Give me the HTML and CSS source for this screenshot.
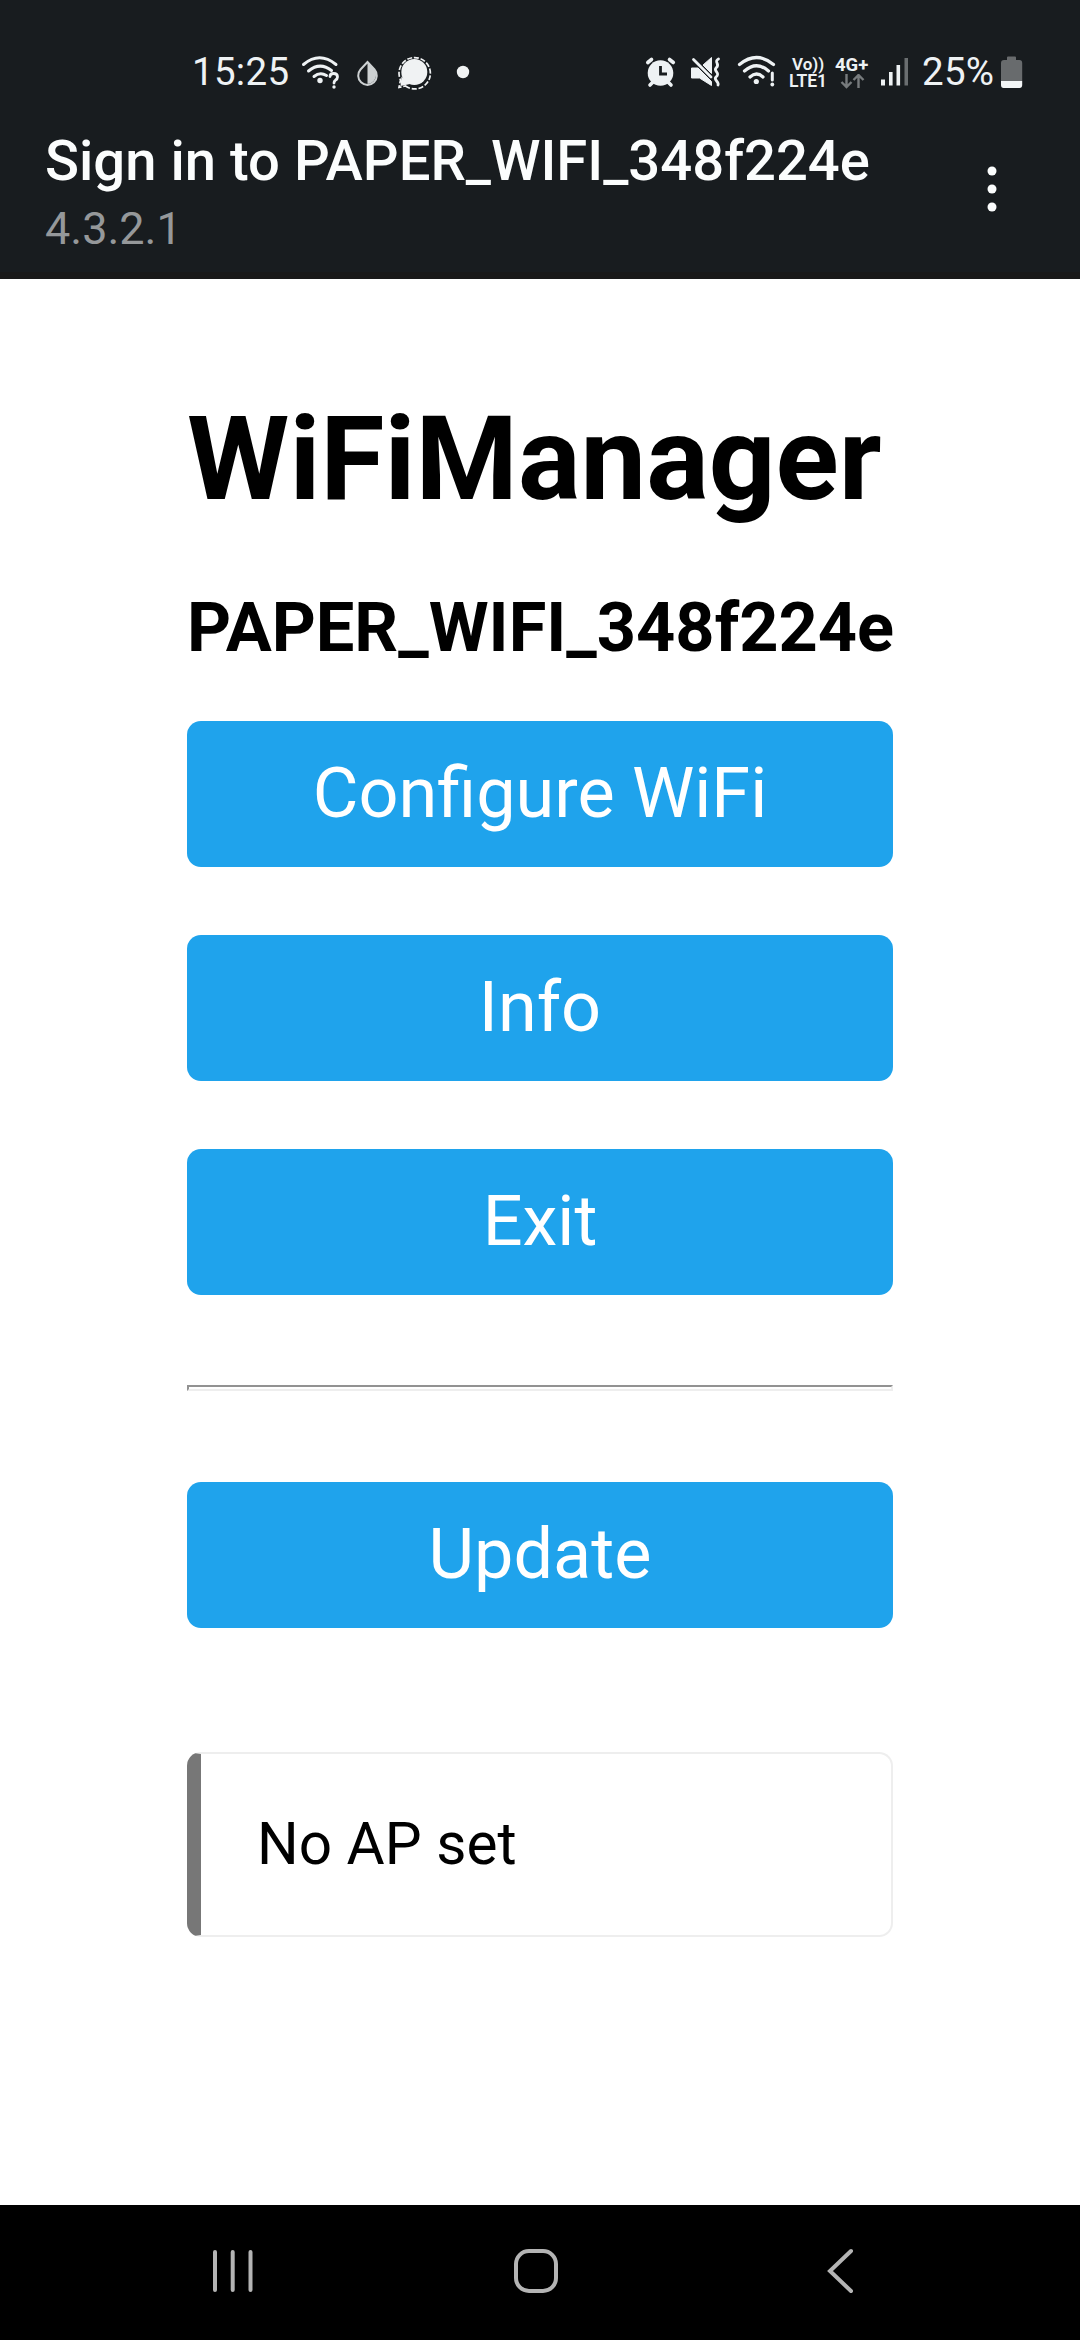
FILE: index.html
```html
<!DOCTYPE html>
<html lang="en">
<head>
<meta charset="utf-8">
<title>Sign in to PAPER_WIFI_348f224e</title>
<link rel="stylesheet" href="styles.css">
</head>
<body>
<header class="top">
  <div class="status">
    <div class="status-group">
      <span class="clock">15:25</span>
      <svg width="44" height="60" viewBox="298 40 44 60" fill="none" stroke="#eef2f4" stroke-width="3" stroke-linecap="round">
        <path d="M303.500 64.500Q319.500 51 336 64.500M308.500 71Q320 61.500 331.500 70.500M314 76.500Q320 71.500 326.500 75.500"/>
        <circle cx="320" cy="80.500" r="2.700" fill="#eef2f4" stroke="none"/>
        <path d="M330 76.500Q330 73.500 333.600 73.500Q337.500 73.500 337.500 77Q337.500 79 335.300 80.300Q334 81.200 334 83" stroke-width="2.800"/>
        <circle cx="334" cy="87" r="1.700" fill="#eef2f4" stroke="none"/>
      </svg>
      <svg width="50" height="60" viewBox="342 40 50 60">
        <path d="M367.500 62L374.500 69.500A9.300 9.300 0 1 1 360.500 69.500Z" fill="none" stroke="#cdd1d2" stroke-width="2"/>
        <path d="M367.500 61.500L374.500 69.500A9.300 9.300 0 0 1 367.500 84Z" fill="#cdd1d2"/>
      </svg>
      <svg width="50" height="60" viewBox="392 40 50 60">
        <circle cx="414.300" cy="72" r="13" fill="#f0f2f3"/>
        <path d="M401.500 76.500L400.500 86L410 84Z" fill="#f0f2f3"/>
        <path d="M405.500 86A15.700 15.700 0 1 0 400.500 80L399 87.500Z" fill="none" stroke="#f0f2f3" stroke-width="1.700" stroke-dasharray="5 1.800"/>
      </svg>
      <svg width="42" height="60" viewBox="442 40 42 60"><circle cx="463" cy="72" r="6.200" fill="#f0f2f3"/></svg>
    </div>
    <div class="status-group">
      <svg width="42" height="60" viewBox="640 40 42 60" stroke="#eef2f4" fill="none">
        <circle cx="660.500" cy="73" r="12.800" fill="#eef2f4" stroke="none"/>
        <path d="M647.800 62.500L651.500 59.500M669.500 59.500L673.300 62.500M653 82L650 85M668 82L671 85" stroke-width="3.600" stroke-linecap="round"/>
        <path d="M660.500 66V74H667" stroke="#181c1f" stroke-width="2.800"/>
      </svg>
      <svg width="46" height="60" viewBox="682 40 46 60">
        <path d="M691.500 68H698L711.500 81.500V85.500L699.500 78H691.500ZM703 65L711.500 57.500V73.500Z" fill="#eef2f4" stroke="#eef2f4" stroke-linejoin="round"/>
        <path d="M693.500 59.500L711 77M718.500 59C713 62 721 64 716 68C713 71 721 73 716 77C713 80 719.500 81.500 718 85" fill="none" stroke="#eef2f4" stroke-width="2.800" stroke-linecap="round"/>
      </svg>
      <svg width="57" height="60" viewBox="728 40 57 60" fill="none" stroke="#eef2f4" stroke-width="3.200" stroke-linecap="round">
        <path d="M739.500 64.500Q756.500 50.500 773.500 64.500M744.500 71Q756.500 60.500 768.500 71M750 77Q756.500 71 763 77"/>
        <circle cx="756.300" cy="81.500" r="2.600" fill="#eef2f4" stroke="none"/>
        <path d="M772.300 73V80" stroke-width="3"/>
        <circle cx="772.300" cy="84.500" r="1.900" fill="#eef2f4" stroke="none"/>
      </svg>
      <div class="volte"><span class="vo">Vo))</span><span class="lte">LTE1</span></div>
      <div class="network"><span>4G+</span>
        <svg width="26" height="16" viewBox="838 74 26 16" fill="none" stroke="#777b7d" stroke-width="2.400"><path d="M845.500 74V86.500M840.500 82L845.500 87L850.500 82M857.500 88V75.500M852.500 80L857.500 75L862.500 80"/></svg>
      </div>
      <svg width="43" height="60" viewBox="874 40 43 60" fill="#eef2f4"><path d="M881 79.500h4v6h-4zM889 72h3.600v13.500h-3.600zM896.500 65h3.600v20.500h-3.600z"/><path d="M904.500 58h3.500v27.500h-3.500z" fill="#6a6e70"/></svg>
      <span class="percent">25%</span>
      <svg width="30" height="60" viewBox="997 40 30 60"><path d="M1007 60V57.500Q1007 56.500 1008 56.500H1015Q1016 56.500 1016 57.500V60H1019.500Q1022.200 60 1022.200 63V81H1001V63Q1001 60 1004 60Z" fill="#686b6d"/><path d="M1001 81H1022.200V85Q1022.200 88 1019.500 88H1003.500Q1001 88 1001 85Z" fill="#f3f6f7"/></svg>
    </div>
  </div>
  <div class="bar">
    <div class="bar-text">
      <div class="bar-title">Sign in to PAPER_WIFI_348f224e</div>
      <div class="bar-sub">4.3.2.1</div>
    </div>
    <svg class="more" width="12" height="50" viewBox="0 0 12 50" fill="#fbfdfd"><circle cx="6" cy="7" r="4.500"/><circle cx="6" cy="25" r="4.500"/><circle cx="6" cy="43" r="4.500"/></svg>
  </div>
</header>
<main class="portal">
  <h1>WiFiManager</h1>
  <h3>PAPER_WIFI_348f224e</h3>
  <div class="menu">
    <button>Configure WiFi</button>
    <button>Info</button>
    <button>Exit</button>
  </div>
  <div class="rule"></div>
  <button>Update</button>
  <div class="msg">No AP set</div>
</main>
<nav class="nav">
  <svg width="42" height="44" viewBox="0 0 42 44" stroke="#b4b4b4" stroke-width="4" stroke-linecap="round"><path d="M3 3V41M20.700 3V41M38.500 3V41"/></svg>
  <svg class="home" width="46" height="46" viewBox="0 0 46 46" fill="none" stroke="#b4b4b4" stroke-width="4"><rect x="3" y="3" width="40" height="40" rx="13"/></svg>
  <svg width="28" height="48" viewBox="0 0 28 48" fill="none" stroke="#b4b4b4" stroke-width="4" stroke-linecap="round"><path d="M25 4L4 24L25 44"/></svg>
</nav>
</body>
</html>
```

FILE: styles.css
```css
* { box-sizing: border-box; }
body {
  margin: 0;
  width: 1080px;
  height: 2340px;
  display: flex;
  flex-direction: column;
  background: #fff;
  color: #000;
  font-family: Roboto, sans-serif;
}
svg { display: block; flex: none; }
.top {
  height: 279px;
  background: #181c1f;
  border-bottom: 7px solid #191919;
}
.status {
  height: 120px;
  padding: 40px 53px 20px 190px;
  display: flex;
  justify-content: space-between;
}
.status-group { display: flex; height: 60px; }
.clock, .percent {
  color: #eef2f4;
  font-size: 38.5px;
  line-height: 64px;
  white-space: nowrap;
}
.clock { width: 108px; padding-left: 2px; letter-spacing: 0.3px; }
.percent { width: 80px; padding-left: 5px; letter-spacing: 0.3px; }
.volte, .network {
  color: #eef2f4;
  font-weight: 700;
  white-space: nowrap;
  display: flex;
  flex-direction: column;
  padding-top: 16px;
}
.volte { width: 47px; padding-left: 4px; font-size: 17px; font-weight: 600; line-height: 16px; }
.vo { padding-left: 3px; }
.lte { font-size: 17.5px; line-height: 18px; }
.network { width: 42px; padding-left: 3px; font-size: 18.5px; line-height: 18px; }
.network svg { margin-left: 4px; }
.bar {
  height: 152px;
  padding: 0 82px 0 45px;
  display: flex;
  justify-content: space-between;
}
.bar-title {
  color: #fbfdfd;
  font-size: 56.2px;
  font-weight: 500;
  line-height: 66px;
  padding-top: 8px;
  white-space: nowrap;
}
.bar-sub { color: #95989a; font-size: 45px; line-height: 54px; margin-top: 8px; }
.more { margin-top: 44px; }
.portal {
  flex: 1;
  width: 706px;
  margin: 0 0 0 187px;
  display: flex;
  flex-direction: column;
  font-size: 58.5px;
}
h1 { margin: 110px 0 0; font-size: 117px; line-height: 140px; white-space: nowrap; }
h3 { margin: 59px 0 0; font-size: 68.5px; line-height: 80px; white-space: nowrap; }
.menu { display: flex; flex-direction: column; gap: 68px; margin-top: 53px; }
button {
  width: 100%;
  height: 146px;
  border: 0;
  border-radius: 14px;
  padding: 0 0 2px;
  background: #1fa3ec;
  color: #fff;
  font: 400 70.2px/144px Roboto, sans-serif;
}
.rule {
  margin: 90px 0 91px;
  height: 6px;
  border: 2px solid;
  border-color: #929292 #eee #eee #929292;
}
.msg {
  margin-top: 124px;
  height: 185px;
  padding-left: 56px;
  border: 2px solid #eee;
  border-left: 14px solid #777;
  border-radius: 14px;
  line-height: 181px;
}
.nav {
  height: 135px;
  padding: 0 226px 4px 212px;
  background: #000;
  display: flex;
  align-items: center;
  justify-content: space-between;
}
.home { margin-right: 9px; }
```
